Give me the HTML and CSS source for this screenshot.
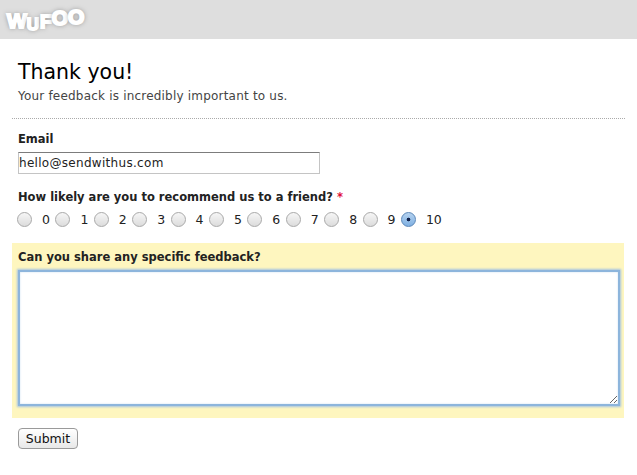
FILE: index.html
```html
<!DOCTYPE html>
<html lang="en">
  <head>
    <meta charset="UTF-8" />
    <title>Thank you!</title>
    <link rel="stylesheet" href="styles.css">
  </head>
  <body>
    <header class="topbar">
      <div class="logo"><span>W</span><span>U</span><span>F</span><span>O</span><span>O</span></div>
    </header>
    <form class="form">
      <div class="info">
        <h1>Thank you!</h1>
        <p>Your feedback is incredibly important to us.</p>
      </div>
      <div class="field">
        <label class="desc" for="email">Email</label>
        <input class="text" id="email" type="text" value="hello@sendwithus.com">
      </div>
      <div class="field rating">
        <div class="desc">How likely are you to recommend us to a friend? <span class="req">*</span></div>
        <div class="choices">
          <label><input type="radio" name="score"><span>0</span></label>
          <label><input type="radio" name="score"><span>1</span></label>
          <label><input type="radio" name="score"><span>2</span></label>
          <label><input type="radio" name="score"><span>3</span></label>
          <label><input type="radio" name="score"><span>4</span></label>
          <label><input type="radio" name="score"><span>5</span></label>
          <label><input type="radio" name="score"><span>6</span></label>
          <label><input type="radio" name="score"><span>7</span></label>
          <label><input type="radio" name="score"><span>8</span></label>
          <label><input type="radio" name="score"><span>9</span></label>
          <label><input type="radio" name="score" checked><span>10</span></label>
        </div>
      </div>
      <div class="field focused">
        <label class="desc" for="comments">Can you share any specific feedback?</label>
        <textarea id="comments"></textarea>
      </div>
      <button class="submit" type="button">Submit</button>
    </form>
  </body>
</html>
```

FILE: styles.css
```css
* {
  margin: 0;
  padding: 0;
  box-sizing: border-box;
}

body {
  background: #fff;
  color: #222;
  font-family: "DejaVu Sans", sans-serif;
  font-size: 12px;
}

.topbar {
  height: 39px;
  background: #dedede;
  padding: 8px 0 0 7px;
}

.logo {
  display: flex;
  color: #fff;
  font-family: "Liberation Sans", sans-serif;
  font-size: 21px;
  font-weight: bold;
  line-height: 24px;
  -webkit-text-stroke: 2px #fff;
  text-shadow: 0 0 5px rgba(0, 0, 0, 0.5);
}

.logo span:nth-child(1) {
  margin-top: 1px;
}

.logo span:nth-child(2) {
  font-size: 17px;
  margin-top: 5px;
}

.logo span:nth-child(3) {
  font-size: 19px;
  margin-top: 2px;
  margin-left: 1px;
}

.logo span:nth-child(4) {
  margin-top: -2px;
}

.logo span:nth-child(5) {
  margin-top: -3px;
}

.form {
  padding: 0 12px;
  width: 637px;
}

.info {
  padding: 19px 6px 14px;
  border-bottom: 1px dotted #aaa;
}

.info h1 {
  color: #000;
  font-size: 20.5px;
  font-weight: normal;
  line-height: 28px;
}

.info p {
  margin-top: 2px;
  color: #444;
  font-size: 12px;
  line-height: 16px;
  letter-spacing: 0.2px;
}

.field {
  padding: 0 6px;
}

.desc {
  display: block;
  color: #222;
  font-size: 11.5px;
  font-weight: bold;
  line-height: 16px;
}

.info + .field {
  margin-top: 12px;
}

.text {
  display: block;
  width: 302px;
  height: 22px;
  margin-top: 5px;
  padding: 0;
  border: 1px solid #c4c4c4;
  border-top-color: #7c7c7c;
  color: #222;
  font-family: inherit;
  font-size: 12px;
  letter-spacing: 0.3px;
  outline: none;
}

.rating {
  margin-top: 15px;
}

.req {
  color: #e0103a;
}

.choices {
  display: flex;
  margin-top: 6px;
  margin-left: -1px;
  height: 16px;
}

.choices label {
  display: flex;
  align-items: center;
  width: 38.4px;
}

.choices input {
  appearance: none;
  width: 15px;
  height: 15px;
  flex-shrink: 0;
  border: 1px solid #a9a9a9;
  border-radius: 50%;
  background: linear-gradient(#f6f6f6, #dcdcdc);
}

.choices input:checked {
  border-color: #5b87b8;
  background: radial-gradient(circle, #10204a 0 1.5px, transparent 2.2px), linear-gradient(#b5d2ef, #7fb0e2);
}

.choices span {
  margin-left: 10px;
  color: #222;
  font-size: 12.5px;
}

.focused {
  margin-top: 16px;
  margin-right: 1px;
  padding-top: 6px;
  height: 175px;
  background: #fef6bf;
}

.focused textarea {
  display: block;
  width: 602px;
  height: 136px;
  margin-top: 5px;
  border: 2px solid #8db5dc;
  outline: none;
  box-shadow: 0 0 2px 1px #a5c4e2, inset 0 0 2px #c6dbee;
  font-family: inherit;
}

.submit {
  display: block;
  width: 60px;
  height: 21px;
  margin: 10px 0 0 6px;
  border: 1px solid #9a9a9a;
  border-radius: 4px;
  background: linear-gradient(#fff, #e8e8e8);
  color: #111;
  font-family: inherit;
  font-size: 12.5px;
}
```
